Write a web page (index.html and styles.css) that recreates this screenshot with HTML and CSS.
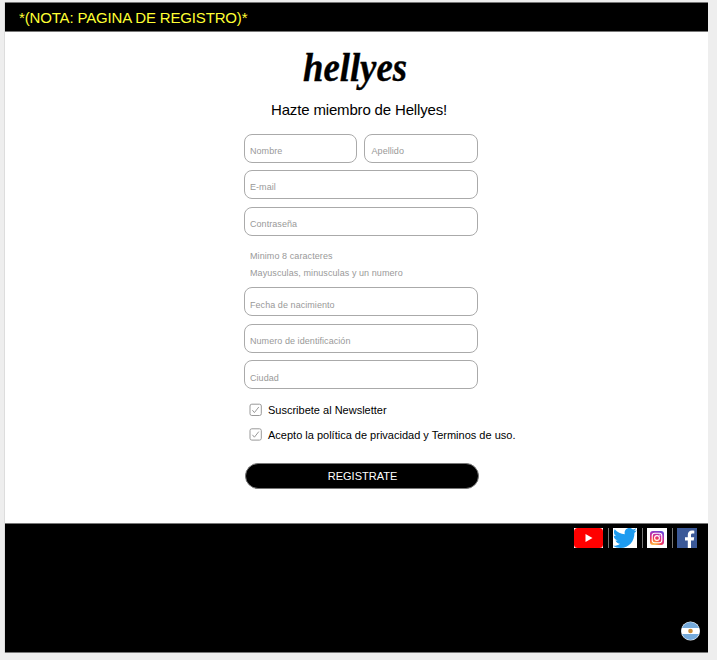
FILE: index.html
```html
<!DOCTYPE html>
<html lang="es">
<head>
<meta charset="utf-8">
<title>Hellyes - Registro</title>
<link rel="stylesheet" href="styles.css">
</head>
<body>
<div class="page">
  <header class="note">*(NOTA: PAGINA DE REGISTRO)*</header>
  <main class="main">
    <svg class="logo" width="124" height="52" viewBox="0 0 124 52"><text x="8" y="37" textLength="104" lengthAdjust="spacingAndGlyphs">hellyes</text></svg>
    <h1 class="title">Hazte miembro de Hellyes!</h1>
    <form class="form">
      <div class="row">
        <div class="field">Nombre</div>
        <div class="field right">Apellido</div>
      </div>
      <div class="field high">E-mail</div>
      <div class="field">Contraseña</div>
      <div class="hint"><p>Minimo 8 caracteres</p><p>Mayusculas, minusculas y un numero</p></div>
      <div class="field">Fecha de nacimiento</div>
      <div class="field">Numero de identificación</div>
      <div class="field">Ciudad</div>
      <div class="checks">
        <div class="check"><svg width="13" height="13" viewBox="0 0 13 13"><rect x="1" y="1.2" width="11.3" height="11.3" rx="1.8"/><path d="M3.4 7.200l2 2.4L9.8 4"/></svg><span>Suscribete al Newsletter</span></div>
        <div class="check"><svg width="13" height="13" viewBox="0 0 13 13"><rect x="1" y=".8" width="11.3" height="11.3" rx="1.8"/><path d="M3.4 6.8l2 2.4L9.8 3.6"/></svg><span>Acepto la política de privacidad y Terminos de uso.</span></div>
      </div>
      <button class="submit" type="button">REGISTRATE</button>
    </form>
  </main>
  <footer class="footer">
    <div class="social">
      <svg width="29" height="20" viewBox="0 0 29 20"><path fill="#fff" d="M0 0h29v20H0z"/><rect width="29" height="20" rx="3.500" fill="#f00"/><path fill="#fff" d="M11.500 6v8l7-4z"/></svg>
      <i class="bar bar-a"></i>
      <svg width="24" height="20" viewBox="0 0 24 20"><path fill="#fff" d="M0 0h24v20H0z"/><path fill="#1d9bf0" d="M1.7 1.2c2.6 3 6 4.8 10.1 5C10.900 2.600 13.300 0 16.400 0c1.500 0 2.700.6 3.600 1.500 1.200-.2 2.200-.6 3.100-1.200-.3 1.200-1.100 2.100-2.100 2.800 1-.1 1.900-.4 2.800-.8-.7 1-1.500 1.900-2.400 2.600C21.700 12.600 16 20 7.600 20 4.800 20 2.200 19.200 0 17.800c2.500.3 5-.4 7-2-2.100-.1-3.900-1.500-4.500-3.400.7.1 1.500.1 2.100-.1C2.300 11.800.7 9.800.7 7.400c.7.4 1.400.6 2.200.6C.8 6.500.3 3.600 1.700 1.200z"/></svg>
      <i class="bar bar-b"></i>
      <svg width="20" height="20" viewBox="0 0 20 20"><defs><radialGradient id="ig" cx=".28" cy="1.05" r="1.15"><stop offset="0" stop-color="#ffd45c"/><stop offset=".25" stop-color="#fb8b38"/><stop offset=".5" stop-color="#ed315d"/><stop offset=".75" stop-color="#bd2fae"/><stop offset="1" stop-color="#6547da"/></radialGradient></defs><path fill="#fff" d="M0 0h20v20H0z"/><rect x="3" y="3" width="14" height="14" rx="3" fill="url(#ig)"/><g fill="none" stroke="#fff" stroke-width="1.100"><rect x="5.200" y="5.200" width="9.600" height="9.600" rx="2.500"/><circle cx="10" cy="10" r="2.400"/></g><circle cx="12.800" cy="7.200" r=".6" fill="#fff"/></svg>
      <i class="bar bar-c"></i>
      <svg width="20" height="20" viewBox="0 0 20 20"><path fill="#3b5998" d="M0 0h20v20H0z"/><path fill="#fff" d="M10.800 20v-7.600H8V9.200h2.800V6.900c0-2.800 1.600-4.400 4.200-4.400.9 0 1.800.1 2.300.2v2.800h-1.600c-1.300 0-1.700.7-1.700 1.600v2.100h3.200l-.5 3.200H14V20z"/></svg>
    </div>
    <svg class="flag" width="20" height="20" viewBox="0 0 20 20"><defs><clipPath id="round"><circle cx="10.500" cy="10" r="9"/></clipPath></defs><circle cx="10.500" cy="10" r="9.500" fill="#eef3f8"/><g clip-path="url(#round)"><path fill="#75aadb" d="M0 0h20v20H0z"/><path fill="#fff" d="M0 7h20v6H0z"/></g><circle cx="10.500" cy="10" r="2.300" fill="#c98b35"/></svg>
  </footer>
</div>
</body>
</html>
```
FILE: styles.css
```css
* { box-sizing: border-box; }
body {
  margin: 0;
  padding: 2px 9px 7px 5px;
  height: 660px;
  overflow: hidden;
  background: #eee;
  font-family: "Liberation Sans", Arial, sans-serif;
  color: #000;
}
.page {
  height: 651px;
  background: #fff;
  box-shadow: -1px 0 #ddd;
  display: flex;
  flex-direction: column;
}
.note {
  height: 30px;
  padding-left: 14px;
  background: #000;
  border-top: 1px solid #777;
  border-bottom: 1px solid #777;
  color: #ff3;
  font-size: 15px;
  letter-spacing: -.16px;
  line-height: 30px;
  white-space: nowrap;
}
.main {
  height: 491px;
  padding: 12px 0 0 239px;
}
.logo { display: block; margin-left: 51px; overflow: visible; }
.logo text {
  font: italic bold 40px "Liberation Serif", serif;
  stroke: #000;
  stroke-width: .4px;
}
.title {
  margin: 4px 0 0 27px;
  font-size: 15px;
  font-weight: 400;
  letter-spacing: -.16px;
  line-height: 19px;
  white-space: nowrap;
}
.form { display: flex; flex-direction: column; width: 234px; margin-top: 14.5px; }
.row { display: flex; gap: 7px; }
.row .field { flex: 1; }
.field {
  height: 29px;
  margin-bottom: 7.5px;
  padding: 10.5px 0 0 5px;
  border: 1px solid #aaa;
  border-radius: 8px;
  color: #999;
  font-size: 9px;
  letter-spacing: .06px;
  line-height: 12px;
}
.high { padding-top: 9.500px; }
.row .right { padding-left: 7px; }
.hint {
  height: 44px;
  padding: 4.500px 0 0 6px;
  color: #999;
  font-size: 9px;
  letter-spacing: .08px;
  line-height: 17px;
  white-space: nowrap;
}
.hint p { margin: 0; }
.checks { margin: .5px 0 0 5px; }
.check {
  height: 25px;
  display: flex;
  align-items: center;
  gap: 6px;
  font-size: 11px;
  white-space: nowrap;
}
.check svg { flex: none; fill: none; stroke: #999; stroke-width: 1; }
.submit {
  width: 234px;
  height: 26px;
  margin: 16px 0 0 1px;
  padding: 0 0 0 1px;
  border: 1px solid #777;
  border-radius: 13px;
  background: #000;
  color: #fff;
  font: 11px "Liberation Sans", Arial, sans-serif;
}
.footer {
  height: 130px;
  padding: 4px 8px 11px 0;
  background: #000;
  border-top: 1px solid #777;
  border-bottom: 1px solid #777;
  display: flex;
  flex-direction: column;
  justify-content: space-between;
  align-items: flex-end;
}
.social { display: flex; padding-right: 3px; }
.social svg { display: block; }
.bar { width: 1px; height: 20px; background: #777; }
.bar-a { margin: 0 4px 0 5px; }
.bar-b { margin: 0 4px 0 5px; }
.bar-c { margin: 0 4px 0 5px; }
.flag { display: block; }
```
